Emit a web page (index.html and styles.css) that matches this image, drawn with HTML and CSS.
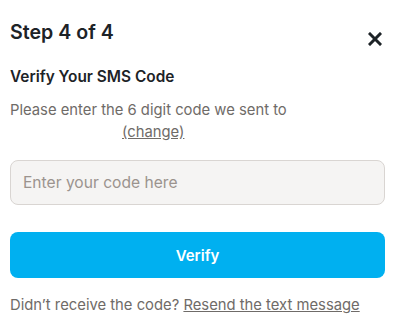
FILE: index.html
```html
<!DOCTYPE html>
<html>
<head>
<meta charset="utf-8">
<link rel="stylesheet" href="styles.css">
</head>
<body>
<div class="modal">
  <div class="header">
    <h1 class="title">Step 4 of 4</h1>
    <button class="close" aria-label="Close">
      <svg width="14" height="14" viewBox="0 0 14 14"><path d="M2 2L12 12M12 2L2 12" stroke="#1d2327" stroke-width="3" stroke-linecap="square"/></svg>
    </button>
  </div>
  <h2 class="subtitle">Verify Your SMS Code</h2>
  <p class="desc">Please enter the 6 digit code we sent to <span class="phone"></span><a class="link" href="#">(change)</a></p>
  <input class="code" type="text" placeholder="Enter your code here">
  <button class="verify">Verify</button>
  <p class="footer">Didn’t receive the code? <a class="link" href="#">Resend the text message</a></p>
</div>
</body>
</html>
```
FILE: styles.css
```css
* { box-sizing: border-box; }
body {
  margin: 0;
  background: #fff;
  font-family: Inter, "Noto Sans", sans-serif;
  color: #1d2327;
}
.modal {
  padding: 0 10px;
  display: flex;
  flex-direction: column;
}
.header {
  display: flex;
  justify-content: space-between;
  align-items: flex-start;
  padding-top: 20px;
}
.title {
  margin: 0;
  font-size: 19.6px;
  font-weight: 600;
  line-height: 24px;
}
.close {
  border: 0;
  background: none;
  padding: 0;
  margin: 12px 3px 0 0;
  width: 14px;
  height: 14px;
  display: flex;
}
.subtitle {
  margin: 21px 0 0;
  font-size: 15.4px;
  font-weight: 600;
  line-height: 20px;
}
.desc {
  margin: 12px 0 0;
  font-size: 14.8px;
  line-height: 22px;
  color: #6f6b68;
  width: 300px;
}
.phone {
  display: inline-block;
  width: 112px;
}
.link {
  color: #6f6b68;
  text-decoration: underline;
}
.code {
  margin-top: 17px;
  height: 45px;
  width: 100%;
  border: 1px solid #d9d5d2;
  background: #f5f4f3;
  border-radius: 8px;
  padding: 0 12px;
  font-family: inherit;
  font-size: 15.6px;
  color: #1d2327;
}
.code::placeholder { color: #9b938e; }
.verify {
  margin-top: 27px;
  height: 46px;
  width: 100%;
  border: 0;
  border-radius: 8px;
  background: #00b0f0;
  color: #fff;
  font-family: inherit;
  font-size: 15px;
  font-weight: 600;
}
.footer {
  margin: 16px 0 0;
  font-size: 14.8px;
  line-height: 22px;
  color: #6f6b68;
}
```
